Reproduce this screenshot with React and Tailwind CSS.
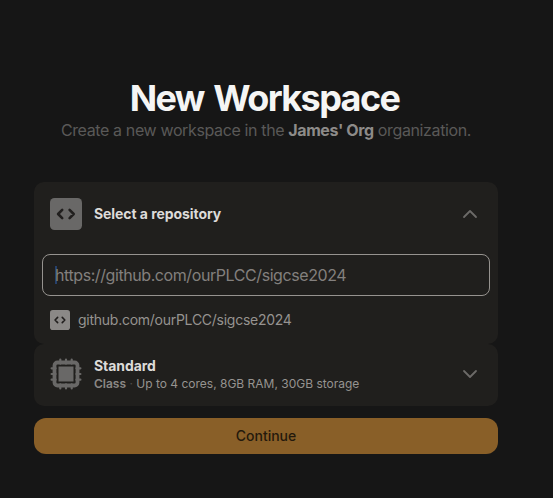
import { ChevronDown, ChevronUp } from "lucide-react";

function CodeTile({ className }) {
  return (
    <svg viewBox="0 0 32 32" className={className}>
      <rect width="32" height="32" rx="4.5" fill="currentColor" />
      <path
        d="M12.2 11.9 8.1 16l4.1 4.1M19.6 11.9 23.7 16l-4.1 4.1"
        fill="none"
        stroke="#211f1e"
        strokeWidth="2.6"
        strokeLinecap="round"
        strokeLinejoin="round"
      />
    </svg>
  );
}

function Chip({ className }) {
  return (
    <svg viewBox="0 0 32 32" className={className} fill="none" stroke="currentColor">
      <path
        d="M10.3 1.6v4M16 1.6v4M21.7 1.6v4M10.3 26.4v4M16 26.4v4M21.7 26.4v4M1.6 10.3h4M1.6 16h4M1.6 21.7h4M26.4 10.3h4M26.4 16h4M26.4 21.7h4"
        strokeWidth="2.2"
        strokeLinecap="round"
      />
      <rect x="4.5" y="4.5" width="23" height="23" rx="3" strokeWidth="3.8" />
      <rect x="8.5" y="8.5" width="15" height="15" fill="currentColor" stroke="none" />
    </svg>
  );
}

export default function App() {
  return (
    <main className="h-[498px] w-[553px] overflow-hidden bg-[#161616] pl-[34px] pt-[78px] font-['Inter',sans-serif]">
      <div className="w-[464px]">
        <header className="text-center whitespace-nowrap">
          <h1 className="h-10 pr-[3px] text-4xl leading-10 font-bold tracking-[-1.6px] [word-spacing:2.5px] text-[#f5f5f4]">New Workspace</h1>
          <p className="h-6 text-base leading-6 tracking-[-0.37px] text-[#5a5958]">
            Create a new workspace in the <span className="font-bold tracking-[-0.4px] text-[#8d8b89]">James' Org</span> organization.
          </p>
        </header>

        <section className="mt-10 h-[162px] rounded-[10px] bg-[#201f1d]">
          <div className="flex h-16 items-center px-4">
            <CodeTile className="size-8 text-[#696867]" />
            <h2 className="ml-3 flex-1 text-sm font-bold tracking-[-0.07px] text-[#dddbd9]">Select a repository</h2>
            <ChevronUp className="size-6 text-[#6c6a68]" strokeWidth={1.8} />
          </div>
          <div className="mx-2 mt-2 flex h-[42px] items-center rounded-lg border border-[#96938f] px-3 text-base tracking-[-0.42px] text-[#83807e]">
            <span className="-mr-[2px] h-[18px] w-[2px] bg-[#26406b]" />
            <span className="relative">https://github.com/ourPLCC/sigcse2024</span>
          </div>
          <div className="flex h-12 items-center gap-2 px-4 text-sm tracking-[-0.26px] text-[#969390]">
            <CodeTile className="size-5 text-[#8b8987]" />
            github.com/ourPLCC/sigcse2024
          </div>
        </section>

        <section className="flex h-[62px] items-center rounded-[10px] bg-[#201f1d] px-4 pb-0.5">
          <Chip className="size-8 text-[#696867]" />
          <div className="ml-3 flex-1">
            <h2 className="h-5 text-sm leading-5 font-bold tracking-[-0.07px] text-[#dddbd9]">Standard</h2>
            <p className="h-4 text-xs leading-4 text-[#969390]">
              <span className="font-semibold text-[#8a8785]">Class</span> <span className="text-[#504e4c]">·</span> Up to 4 cores, 8GB RAM, 30GB storage
            </p>
          </div>
          <ChevronDown className="size-6 text-[#6c6a68]" strokeWidth={1.8} />
        </section>

        <button className="mt-3 flex h-9 w-full items-center justify-center rounded-xl bg-[#895f28] text-sm font-medium text-[#24190c]">
          Continue
        </button>
      </div>
    </main>
  );
}
